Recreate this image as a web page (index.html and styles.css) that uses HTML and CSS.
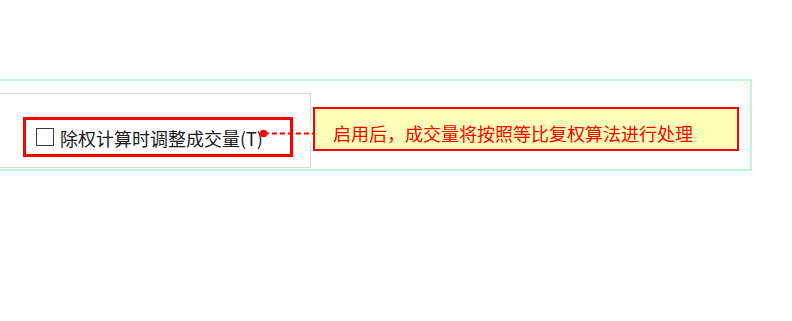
FILE: index.html
```html
<!DOCTYPE html>
<html lang="zh-CN">
<head>
<meta charset="utf-8">
<title>除权计算时调整成交量</title>
<link rel="stylesheet" href="styles.css">
</head>
<body>
  <div class="frame">
    <div class="panel">
      <label class="option">
        <span class="check"></span>
        <span class="label">除权计算时调整成交量(T)</span>
      </label>
    </div>
    <svg class="connector" width="56" height="16" viewBox="0 0 56 16" aria-hidden="true">
      <rect x="51" y="0" width="3" height="16" fill="#ffffff"/>
      <line x1="6" y1="8.5" x2="55" y2="8.5" stroke="#ff0000" stroke-width="1.8" stroke-dasharray="5 3"/>
      <circle cx="5.5" cy="8.5" r="3.8" fill="#ff0000"/>
    </svg>
    <div class="callout">启用后，成交量将按照等比复权算法进行处理</div>
  </div>
</body>
</html>
```

FILE: styles.css
```css
html, body {
  margin: 0;
  padding: 0;
  background: #ffffff;
}

body {
  font-family: "Noto Sans CJK SC", "Noto Sans", sans-serif;
  overflow: hidden;
}

.frame {
  position: relative;
  box-sizing: border-box;
  width: 772px;
  margin: 79px 0 0 -20px;
  border: 2px solid #bff3da;
  padding: 12px 0 1px 0;
}

.panel {
  box-sizing: border-box;
  width: 329px;
  height: 75px;
  border: 1px solid #dadada;
  padding: 23px 0 0 40px;
  background: #ffffff;
}

.option {
  display: flex;
  align-items: center;
  gap: 6px;
  box-sizing: border-box;
  width: 270px;
  height: 40px;
  border: 3px solid #ff0000;
  padding-left: 10px;
}

.check {
  flex: none;
  box-sizing: border-box;
  width: 18px;
  height: 18px;
  border: 1.5px solid #3c3c3c;
  background: #ffffff;
}

.label {
  font-size: 18px;
  line-height: 18px;
  padding-top: 2px;
  color: #1a1a1a;
  white-space: nowrap;
}

.connector {
  position: absolute;
  left: 276px;
  top: 44px;
}

.callout {
  position: absolute;
  left: 331px;
  top: 26px;
  box-sizing: border-box;
  width: 426px;
  height: 44px;
  border: 2px solid #ff0000;
  background: #ffffb9;
  padding: 12px 0 0 18px;
  font-size: 18px;
  line-height: 24px;
  color: #ff0000;
  white-space: nowrap;
}
```
